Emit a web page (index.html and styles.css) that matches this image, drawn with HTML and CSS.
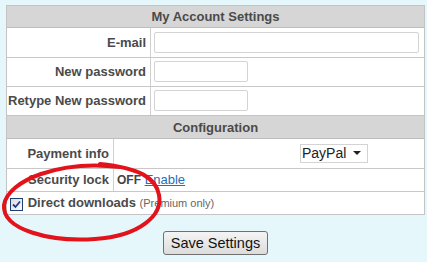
FILE: index.html
```html
<!DOCTYPE html>
<html lang="en">
<head>
    <meta charset="UTF-8">
    <title>My Account Settings</title>
    <link rel="stylesheet" href="styles.css">
</head>
<body>
    <div class="page">
        <div class="settings">
            <div class="section-head">My Account Settings</div>
            <table class="form account">
                <tr>
                    <td class="label">E-mail</td>
                    <td class="value"><input type="text" class="field wide"></td>
                </tr>
                <tr>
                    <td class="label">New password</td>
                    <td class="value"><input type="password" class="field short"></td>
                </tr>
                <tr>
                    <td class="label">Retype New password</td>
                    <td class="value"><input type="password" class="field short"></td>
                </tr>
            </table>
            <div class="section-head config">Configuration</div>
            <table class="form config-table">
                <tr class="pay-row">
                    <td class="label">Payment info</td>
                    <td class="value">
                        <div class="select-box"><span>PayPal</span><span class="arrow"></span></div>
                        <div class="blank"></div>
                    </td>
                </tr>
                <tr class="lock-row">
                    <td class="label">Security lock</td>
                    <td class="value"><b>OFF</b> <a href="#">Enable</a></td>
                </tr>
                <tr class="dl-row">
                    <td colspan="2" class="check-cell">
                        <span class="check">
                            <svg width="9" height="9" viewBox="0 0 9 9"><path d="M1 4.5 L3.5 7 L8 1.5" fill="none" stroke="#21398a" stroke-width="1.8"/></svg>
                        </span>
                        <b>Direct downloads</b>
                        <span class="note">(Premium only)</span>
                    </td>
                </tr>
            </table>
        </div>
        <div class="actions">
            <button>Save Settings</button>
        </div>

        <!-- hand drawn mark -->
        <svg class="circle" width="427" height="262" viewBox="0 0 427 262">
            <path d="M 120 167 C 60 160 8 180 4 205 C 2 230 50 242 95 239 C 140 236 163 215 159 195 C 156 178 140 168 100 164"
                  fill="none" stroke="#e3131c" stroke-width="4" stroke-linecap="round"/>
        </svg>
    </div>
</body>
</html>
```

FILE: styles.css
```css
body {
    margin: 0;
    background-color: #e6f7fb;
    font-family: "Liberation Sans", Arial, sans-serif;
    color: #4a4a4a;
}
.page {
    position: relative;
    width: 427px;
    height: 262px;
    padding: 5px 0 0 6px;
    box-sizing: border-box;
}
.settings {
    width: 419px;
    border: 1px solid #c4c4c4;
    border-top: none;
    background-color: #fff;
    box-sizing: border-box;
}
.section-head {
    height: 23px;
    line-height: 22px;
    background-color: #d6d6d6;
    border-top: 1px solid #c4c4c4;
    border-bottom: 1px solid #bdbdbd;
    box-sizing: border-box;
    text-align: center;
    font-weight: bold;
    font-size: 13px;
}
.section-head.config {
    height: 24px;
    line-height: 23px;
}
.form {
    width: 100%;
    border-collapse: collapse;
    table-layout: fixed;
}
.form td {
    padding: 0;
    border-bottom: 1px solid #c8c8c8;
    font-size: 13px;
    overflow: hidden;
}
.form tr:last-child td {
    border-bottom: none;
}
.label {
    text-align: right;
    font-weight: bold;
    padding-right: 4px !important;
    border-right: 1px solid #d0d0d0;
    white-space: nowrap;
}
.account .label {
    width: 139px;
}
.config-table .label {
    width: 102px;
}
.value {
    padding-left: 3px !important;
}
.account tr {
    height: 29px;
}
.field {
    height: 21px;
    border: 1px solid #d4d4d4;
    border-radius: 2px;
    box-sizing: border-box;
    margin: 0;
    vertical-align: middle;
}
.wide {
    width: 265px;
}
.short {
    width: 94px;
}
.pay-row {
    height: 29px;
}
.pay-row .value {
    position: relative;
}
.select-box {
    margin-left: 183px;
    width: 68px;
    height: 19px;
    border: 1px solid #d4d4d4;
    box-sizing: border-box;
    display: flex;
    align-items: center;
    justify-content: space-between;
    padding: 0 6px 0 1px;
    font-size: 14px;
    color: #222;
}
.arrow {
    width: 0;
    height: 0;
    border-left: 4px solid transparent;
    border-right: 4px solid transparent;
    border-top: 4px solid #222;
}
.blank {
    position: absolute;
    left: -2px;
    top: 2px;
    width: 188px;
    height: 24px;
    background-color: #fff;
}
.lock-row, .dl-row {
    height: 23px;
}
.lock-row b {
    font-size: 12px;
    color: #444;
}
.lock-row a {
    color: #2a6db5;
}
.check-cell {
    padding-left: 3px !important;
}
.check {
    display: inline-flex;
    align-items: center;
    justify-content: center;
    width: 13px;
    height: 13px;
    border: 1px solid #1c3f74;
    box-sizing: border-box;
    background: linear-gradient(135deg, #dcdcdc, #fbfbfb);
    vertical-align: -2px;
    margin-right: 1px;
}
.note {
    font-size: 11px;
    color: #666;
}
.actions {
    width: 419px;
    text-align: center;
    padding-top: 16px;
}
button {
    width: 105px;
    height: 24px;
    font-family: "Liberation Sans", Arial, sans-serif;
    font-size: 14.5px;
    color: #111;
    background: linear-gradient(#f4f4f4, #dcdcdc);
    border: 1px solid #707070;
    border-radius: 3px;
    padding: 0;
}
.circle {
    position: absolute;
    left: 0;
    top: 0;
    pointer-events: none;
}
```
